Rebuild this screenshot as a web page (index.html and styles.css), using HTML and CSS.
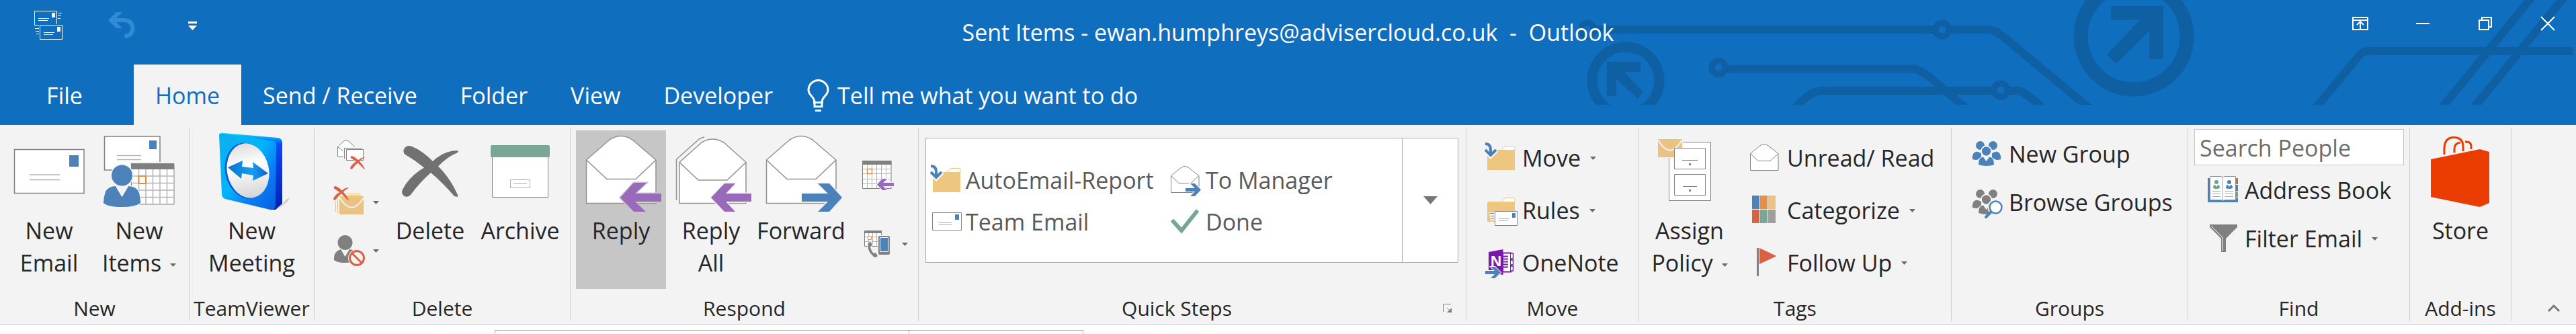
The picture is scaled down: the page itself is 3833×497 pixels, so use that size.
FILE: index.html
```html
<!DOCTYPE html>
<html lang="en">
<head>
  <meta charset="UTF-8">
  <meta name="viewport" content="width=device-width, initial-scale=1.0">
  <title>Sent Items - Outlook</title>
  <link rel="stylesheet" href="styles.css">
</head>
<body>

  <!-- Shared icon shapes -->
  <svg class="defs" width="0" height="0" aria-hidden="true">
    <symbol id="cross" viewBox="0 0 84 76">
      <path d="M15 1Q30 7 46 23Q58 11 75 7.500L83 7Q85 9 82 10.500Q68 16 54 30.500Q72 48 83 73V76L78 75Q62 56 43 40Q26 55 13 73Q9 77 4 75Q-1 72 .5 66Q10 46 33 32.500Q19 21 5 13Q1 10 3 5Q7-2 15 1Z"/>
    </symbol>
    <symbol id="open-mail" viewBox="0 0 48 48">
      <path d="M1.500 17.500L15 6.500Q22 .5 29 6.500L43 17.500V42.500H1.500Z" fill="#fff" stroke="#828282"/>
      <path d="M1.500 17.500L13 28.500H31L43 17.500" fill="none" stroke="#828282"/>
    </symbol>
    <symbol id="open-mail-big" viewBox="0 0 120 123">
      <path d="M8.500 44L43 14Q60 3 77 14L112 44V108.500H8.500Z" fill="#fff" stroke="#929292" stroke-width="1.500"/>
      <path d="M8.500 44L39 72.500H82L112 44" fill="none" stroke="#929292" stroke-width="1.500"/>
    </symbol>
    <symbol id="move-folder" viewBox="0 0 48 48">
      <path d="M25 12L30.500 6.500H43Q45 6.500 45 9V13" fill="#fff" stroke="#edc780"/>
      <path d="M4 12H45V42H4Z" fill="#edc780"/>
      <path class="halo" d="M1 3Q9 3 9 12V21M0 12L9 21L18 12" stroke-width="7" fill="none"/>
      <path d="M1 3Q9 3 9 12V20M1 12L9 20L17 12" stroke="#4c82b9" stroke-width="4" fill="none"/>
    </symbol>
    <symbol id="drop" viewBox="0 0 9 5"><path d="M0 0H9L4.500 5Z" fill="#6a6a6a"/></symbol>
    <symbol id="people" viewBox="0 0 48 48">
      <circle cx="13.500" cy="11.500" r="6.500"/><circle cx="32.500" cy="11.500" r="6.500"/>
      <path d="M2 32Q1 22 8 20.500Q12 21 15 23V31Q10 31 9 33Q4 33 2 32ZM44 32Q45 22 38 20.500Q34 21 31 23V31Q36 31 37 33Q42 33 44 32Z"/>
      <circle class="halo" cx="22.500" cy="20" r="7.500" stroke-width="2"/><circle cx="22.500" cy="20" r="6.500"/>
      <path class="halo" stroke-width="2" paint-order="stroke" d="M11 40Q11 29 18 28.500L22.500 35L27 28.500Q34 29 34 40Q23 44 11 40Z"/>
    </symbol>
  </svg>

  <header class="header">
    <svg class="circuit" width="1483" height="156" viewBox="0 0 1483 156" fill="none" stroke="#0f5fa3" stroke-width="12" aria-hidden="true">
      <path d="M22 44H530M550 44H608Q618 44 630 54L760 162"/>
      <circle cx="11.500" cy="44" r="10" stroke-width="9"/>
      <circle cx="540" cy="44" r="10" stroke-width="9"/>
      <path d="M217 102.500H498Q508 104 524 117L574 160"/>
      <circle cx="207" cy="100.500" r="10" stroke-width="9"/>
      <path d="M322 160Q342 136 360 135H617M637 135H653Q664 137 688 160"/>
      <circle cx="627" cy="134" r="10" stroke-width="9"/>
      <circle cx="69" cy="120" r="50" stroke-width="15"/>
      <path d="M41 92H91V107H67L95 137L87 147L55 118V143H41Z" fill="#0f5fa3" stroke="none"/>
      <circle cx="825" cy="54" r="79" stroke-width="21"/>
      <path d="M791 9H869V88H848V46L799 95L785 81L834 30H791Z" fill="#0f5fa3" stroke="none"/>
      <path d="M1096 160L1161 82Q1166 76 1174 76H1479"/>
      <path d="M1284 160L1417-4M1331 160L1465-4"/>
    </svg>

    <div class="titlebar">
      <div class="quick-access">
        <button class="qa-button" aria-label="Send/Receive All Folders">
          <svg width="44" height="44" viewBox="0 0 44 44" fill="none" stroke="#fff">
            <path d="M33.500 20V.5H.5V21.500H7M8.500 21.500H41.500V42.500H8.500Z"/>
            <path d="M6 11.500H22M6 14.500H20M14 32.500H30M14 35.500H28M35 3.500H41M35 7.500H40M35 11.500H39M1 26.500H7M2 30.500H7M3 34.500H7"/>
            <path d="M26 3H31V10H26ZM34 24H39V31H34Z" fill="#fff" stroke="none"/>
          </svg>
        </button>
        <button class="qa-button" aria-label="Undo">
          <svg width="40" height="40" viewBox="0 0 40 40">
            <path d="M0 12L12 0H21L12 9H24Q39 10 39.500 24Q39 38 24.500 39V33Q33 32 33.500 24Q33 16 24 15H12L21 24H12Z" fill="#2f8bd3"/>
          </svg>
        </button>
        <button class="qa-button narrow" aria-label="Customize Quick Access Toolbar">
          <svg width="13" height="13" viewBox="0 0 13 13"><path d="M0 0H13V3H0ZM0 6H13L6.500 13Z" fill="#fff"/></svg>
        </button>
      </div>
      <h1 class="title">Sent Items - ewan.humphreys@advisercloud.co.uk &nbsp;-&nbsp; Outlook</h1>
      <div class="window-buttons">
        <button class="win-button" aria-label="Ribbon Display Options">
          <svg width="24" height="20" viewBox="0 0 24 20" fill="none" stroke="#fff" stroke-width="2"><path d="M1 1H23V19H1ZM1 5H23M12 18V7M7 12L12 7L17 12"/></svg>
        </button>
        <button class="win-button" aria-label="Minimize">
          <svg width="20" height="20" viewBox="0 0 20 20"><path d="M0 9H20V11H0Z" fill="#fff"/></svg>
        </button>
        <button class="win-button" aria-label="Restore Down">
          <svg width="20" height="20" viewBox="0 0 20 20" fill="none" stroke="#fff" stroke-width="2"><path d="M1 5H15V19H1ZM5 4V1H19V15H16"/></svg>
        </button>
        <button class="win-button" aria-label="Close">
          <svg width="20" height="20" viewBox="0 0 20 20" fill="none" stroke="#fff" stroke-width="2"><path d="M0 0L20 20M20 0L0 20"/></svg>
        </button>
      </div>
    </div>

    <nav class="tabs">
      <button class="tab file">File</button>
      <button class="tab active">Home</button>
      <button class="tab">Send / Receive</button>
      <button class="tab">Folder</button>
      <button class="tab">View</button>
      <button class="tab">Developer</button>
      <button class="tell-me">
        <svg width="33" height="48" viewBox="0 0 33 48" fill="none" stroke="#fff" stroke-width="3">
          <path d="M11 34C11 26 2 24 2 16A14.500 14.500 0 0 1 31 16C31 24 22 26 22 34"/>
          <path d="M9 34.500H24M11 33V40.500H22V33M12 46.500H21"/>
        </svg>
        Tell me what you want to do
      </button>
    </nav>
  </header>

  <main class="ribbon">

    <!-- New -->
    <section class="group">
      <div class="group-body new-body">
        <button class="big">
          <svg class="big-icon" viewBox="0 0 120 123">
            <path d="M8.500 28.500H112V93.500H8.500Z" fill="#fff" stroke="#828282" stroke-width="1.500"/>
            <path d="M90 37H104V54H90Z" fill="#4c82b9"/>
            <path d="M31 66H76M31 73.500H76" stroke="#b4b4b4" stroke-width="1.500"/>
          </svg>
          <span>New<br>Email</span>
        </button>
        <button class="big">
          <svg class="big-icon" viewBox="0 0 120 123">
            <path d="M8.500 9H91V59H8.500Z" fill="#fff" stroke="#828282" stroke-width="1.500"/>
            <path d="M75 15H86V28H75Z" fill="#4c82b9"/>
            <path d="M27 37.500H63M27 43.500H63" stroke="#b4b4b4" stroke-width="1.500"/>
            <path d="M46 47H114V112H46Z" fill="#f3f3f3"/>
            <path d="M48.500 50H112V110H48.500Z" fill="#fff" stroke="#828282"/>
            <path d="M59.500 58V110M70 58V110M80.500 58V110M91 58V110M101.500 58V110M48 68H112M48 78.500H112M48 89H112M48 99.500H112" stroke="#b4b4b4" stroke-width="1.500"/>
            <path d="M48 49H112V58H48Z" fill="#808080"/>
            <path d="M59.500 68H70V79H59.500Z" fill="#fff" stroke="#e78b3e" stroke-width="2"/>
            <g class="halo" fill="#4c82b9" stroke-width="3" paint-order="stroke">
              <circle cx="34.500" cy="67" r="15.500"/>
              <path d="M25 83L34.500 99L44 83Q56 83 60 93Q62 101 62 108Q54 114 34.500 114Q14 114 7 108Q7 99 10 91Q15 83 25 83Z"/>
            </g>
            <path d="M25 83H44L34.500 99Z" fill="#f3f3f3"/>
          </svg>
          <span>New<br>Items <svg class="drop"><use href="#drop"/></svg></span>
        </button>
      </div>
      <div class="group-label">New</div>
    </section>

    <!-- TeamViewer -->
    <section class="group">
      <div class="group-body center">
        <button class="big">
          <svg class="big-icon" viewBox="0 0 120 123">
            <defs>
              <linearGradient id="tv" x1="0" y1="0" x2="1" y2="1"><stop offset="0" stop-color="#0cb0ec"/><stop offset=".45" stop-color="#02b4fb"/><stop offset=".7" stop-color="#0a7df5"/><stop offset="1" stop-color="#0560dd"/></linearGradient>
              <linearGradient id="tv-side" x1="0" y1="0" x2="0" y2="1"><stop offset="0" stop-color="#00e5ff"/><stop offset=".15" stop-color="#0848fb"/><stop offset="1" stop-color="#0220b0"/></linearGradient>
              <linearGradient id="tv-disc" x1="0" y1="0" x2="0" y2="1"><stop offset="0" stop-color="#dedede"/><stop offset=".4" stop-color="#fff"/><stop offset="1" stop-color="#d4d4d4"/></linearGradient>
              <linearGradient id="tv-arrow"><stop offset="0" stop-color="#0a6fd0"/><stop offset=".6" stop-color="#14a0f0"/><stop offset="1" stop-color="#1060c8"/></linearGradient>
            </defs>
            <path d="M97 118L112 102Q118 99 113 106Z" fill="#cfcfcf"/>
            <path d="M11 7Q12 3 18 4L98 11Q105 12 105 18V109L95 118H88Z" fill="url(#tv-side)"/>
            <path d="M11 7Q12 4 18 5L92 16Q96 17 96 22L95 112Q94 119 87 118L20 102Q15 100 15 95Z" fill="url(#tv)"/>
            <ellipse cx="52" cy="60" rx="32" ry="42" transform="rotate(-12 52 60)" fill="#0560d8"/>
            <ellipse cx="54" cy="60" rx="31" ry="41" transform="rotate(-12 54 60)" fill="url(#tv-disc)"/>
            <path d="M24 55L46 45L45 54L62 56L61 47L84 64L61 75L62 67L45 64L44 72Z" fill="url(#tv-arrow)"/>
          </svg>
          <span>New<br>Meeting</span>
        </button>
      </div>
      <div class="group-label">TeamViewer</div>
    </section>

    <!-- Delete -->
    <section class="group">
      <div class="group-body">
        <div class="stack icon-only">
          <button class="row" aria-label="Ignore">
            <svg class="icon" viewBox="0 0 48 48">
              <path d="M6.500 13.500L15 5.500Q19 2 23 5.500L32 13.500V28H6.500Z" fill="#fff" stroke="#828282"/>
              <path d="M6.500 13.500L14 19" stroke="#828282"/>
              <path d="M14.500 13.500H47V36H14.500Z" fill="#f3f3f3"/>
              <path d="M16.500 31V15.500H42M19.500 17.500H44.500V33.500H19.500Z" fill="#fff" stroke="#828282"/>
              <use class="halo" href="#cross" x="25" y="27" width="22" height="20" fill="#d96245"/>
            </svg>
          </button>
          <button class="row" aria-label="Clean Up">
            <svg class="icon" viewBox="0 0 48 48">
              <path d="M9 15H45V42H9Z" fill="#eac282"/>
              <path d="M9 16Q27 47 45 17" fill="none" stroke="#f3f3f3" stroke-width="2"/>
              <path d="M20 11.500H39M21 13.500H42M3.500 22V38M6.500 19V40" stroke="#eac282"/>
              <use href="#cross" width="23" height="21" fill="#d96245"/>
            </svg>
            <svg class="drop"><use href="#drop"/></svg>
          </button>
          <button class="row" aria-label="Junk">
            <svg class="icon" viewBox="0 0 48 48">
              <circle cx="17.500" cy="12" r="11" fill="#808080"/>
              <path d="M11 22L17.500 33L24 22Q33 22 33 34V40Q25 42 17 42Q6 42 1 38Q0 25 11 22Z" fill="#808080"/>
              <circle class="halo" cx="35" cy="35" r="12" fill="#f3f3f3" stroke-width="2"/>
              <circle cx="35" cy="35" r="10.500" fill="#f3f3f3" stroke="#d96245" stroke-width="3"/>
              <path d="M27.500 27.500L42.500 42.500" stroke="#d96245" stroke-width="3"/>
            </svg>
            <svg class="drop"><use href="#drop"/></svg>
          </button>
        </div>
        <button class="big">
          <svg class="big-icon" viewBox="0 0 120 123"><use href="#cross" x="18" y="23" width="84" height="76" fill="#717171"/></svg>
          <span>Delete</span>
        </button>
        <button class="big">
          <svg class="big-icon" viewBox="0 0 120 123">
            <path d="M18.500 38H101.500V99.500H18.500Z" fill="#fff" stroke="#828282"/>
            <rect x="16" y="22" width="88" height="18" rx="2" fill="#7aa795"/>
            <path d="M45.500 73.500H74.500V85.500H45.500ZM50 79.500H70" fill="none" stroke="#b0b0b0"/>
          </svg>
          <span>Archive</span>
        </button>
      </div>
      <div class="group-label">Delete</div>
    </section>

    <!-- Respond -->
    <section class="group">
      <div class="group-body respond-body">
        <button class="big pressed">
          <svg class="big-icon" viewBox="0 0 120 123">
            <use href="#open-mail-big"/>
            <path class="halo" fill="#9969ba" stroke-width="3" paint-order="stroke" d="M59 100L79 78H98L81 94H120V106H81L97 121H79Z"/>
          </svg>
          <span>Reply</span>
        </button>
        <button class="big">
          <svg class="big-icon" viewBox="0 0 120 123">
            <path d="M8.500 104V43L40 15Q44 11 50 10" fill="none" stroke="#929292" stroke-width="1.500"/>
            <path d="M13 47.500L46 18Q62 8 79 18L112 47.500V108.500H13Z" fill="#fff" stroke="#929292" stroke-width="1.500"/>
            <path d="M13 47.500L41 74H84L112 47.500" fill="none" stroke="#929292" stroke-width="1.500"/>
            <path class="halo" fill="#9969ba" stroke-width="3" paint-order="stroke" d="M60 100L80 79H96L82 94H120V106H82L96 121H80Z"/>
          </svg>
          <span>Reply<br>All</span>
        </button>
        <button class="big">
          <svg class="big-icon" viewBox="0 0 120 123">
            <use href="#open-mail-big"/>
            <path class="halo" fill="#4c82b9" stroke-width="3" paint-order="stroke" d="M121 100L102 79H85L100 94H61V106H100L85 121H102Z"/>
          </svg>
          <span>Forward</span>
        </button>
        <div class="stack pair">
          <button class="row" aria-label="Reply with Meeting">
            <svg class="icon" viewBox="0 0 48 48">
              <path d="M.5 3H43V43.500H.5Z" fill="#fff" stroke="#828282"/>
              <path d="M7.500 8V43M14.500 8V43M21.500 8V43M28.500 8V43M35.500 8V43M1 14.500H43M1 21.500H43M1 29.500H43M1 36.500H43" stroke="#b4b4b4"/>
              <path d="M0 2H43.500V8H0Z" fill="#808080"/>
              <path d="M7.500 14.500H14.500V21.500H7.500Z" fill="#fff" stroke="#e78b3e" stroke-width="1.500"/>
              <path class="halo" fill="#9969ba" stroke-width="2" paint-order="stroke" d="M22 37.500L30 29H37L31 35H47V40H31L37 46H30Z"/>
            </svg>
          </button>
          <button class="row" aria-label="More Respond Actions">
            <svg class="icon" viewBox="0 0 48 48">
              <path d="M3.500 5H28.500V27.500H3.500Z" fill="#fff" stroke="#828282"/>
              <path d="M9.500 8V27M15.500 8V27M21.500 8V27M4 13.500H28M4 20.500H28" stroke="#b4b4b4"/>
              <path d="M3 4H29V8H3Z" fill="#808080"/>
              <path d="M8.500 12.500H13.500V17.500H8.500Z" fill="#fff" stroke="#e78b3e"/>
              <path class="halo" fill="#808080" stroke-width="2" paint-order="stroke" d="M9 22L13 21L15 26L12 28Q13 34 17 38L20 37L23 42Q20 45 17 43Q6 34 9 22Z"/>
              <rect class="halo" x="24" y="12" width="17" height="28" rx="2" fill="#808080" stroke-width="2" paint-order="stroke"/>
              <path d="M26.500 14.500H38.500V35.500H26.500Z" fill="#4c82b9" stroke="#fff"/>
            </svg>
            <svg class="drop"><use href="#drop"/></svg>
          </button>
        </div>
      </div>
      <div class="group-label">Respond</div>
    </section>

    <!-- Quick Steps -->
    <section class="group">
      <div class="group-body">
        <div class="gallery">
          <div class="gallery-items">
            <button class="step"><svg class="icon" viewBox="0 0 48 48"><use href="#move-folder"/></svg>AutoEmail-Report</button>
            <button class="step">
              <svg class="icon" viewBox="0 0 48 48">
                <use href="#open-mail"/>
                <path class="halo" fill="#4c82b9" stroke-width="2" paint-order="stroke" d="M46 38.500L37 29H30L37 36H23V41H37L30 48H37Z"/>
              </svg>To Manager</button>
            <button class="step">
              <svg class="icon" viewBox="0 0 48 48">
                <path d="M3.500 10.500H46.500V36.500H3.500Z" fill="#fff" stroke="#828282"/>
                <path d="M37 13H43V21H37Z" fill="#4c82b9"/>
                <path d="M13 25.500H32M13 28.500H32" stroke="#b4b4b4"/>
              </svg>Team Email</button>
            <button class="step">
              <svg class="icon" viewBox="0 0 48 48"><path d="M3 21.500L17 37L41 7" fill="none" stroke="#76a795" stroke-width="6"/></svg>Done</button>
          </div>
          <button class="gallery-more" aria-label="More quick steps">
            <svg width="21" height="12" viewBox="0 0 21 12"><path d="M0 0H21L10.500 12Z" fill="#777"/></svg>
          </button>
        </div>
      </div>
      <div class="group-label">
        <span>Quick Steps</span>
        <button class="launcher" aria-label="Manage Quick Steps">
          <svg width="13" height="13" viewBox="0 0 13 13"><path d="M.5 12V.5H12M6 6L11 11" fill="none" stroke="#808080"/><path d="M13 6V13H6Z" fill="#808080"/></svg>
        </button>
      </div>
    </section>

    <!-- Move -->
    <section class="group">
      <div class="group-body">
        <div class="stack tall">
          <button class="row"><svg class="icon" viewBox="0 0 48 48"><use href="#move-folder"/></svg>Move <svg class="drop"><use href="#drop"/></svg></button>
          <button class="row">
            <svg class="icon" viewBox="0 0 48 48">
              <path d="M25 11L30.500 5.500H43Q45 5.500 45 8V12" fill="#fff" stroke="#edc780"/>
              <path d="M4 13Q4 11 6 11H45V41H4Z" fill="#edc780"/>
              <path d="M7 27H15V39H9Z" fill="#f3f3f3"/>
              <path d="M8 28.500H14M9 32.500H14M10 36.500H14" stroke="#808080"/>
              <path d="M15.500 25.500H48.500V46.500H15.500Z" fill="#fff" stroke="#828282"/>
              <path d="M41 28H46V35H41Z" fill="#4c82b9"/>
              <path d="M21 36.500H37M21 39.500H35" stroke="#b4b4b4"/>
            </svg>Rules <svg class="drop"><use href="#drop"/></svg></button>
          <button class="row">
            <svg class="icon" viewBox="0 0 48 48">
              <path d="M27 9.500H39V37.500H27Z" fill="#fff" stroke="#7719aa" stroke-width="2"/>
              <path d="M39 10H42.500V18H39M39 20H42.500V27H39M39 29H42.500V36H39" fill="#fff" stroke="#7719aa" stroke-width="1.500"/>
              <path d="M28 14.500H35M28 18.500H35M28 22.500H35M28 26.500H35M28 30.500H35" stroke="#7719aa" stroke-width="2"/>
              <path d="M6 8L27.500 4V42L6 38Z" fill="#7719aa"/>
              <text x="17" y="29" text-anchor="middle" font-size="21" font-weight="700" fill="#fff">N</text>
              <path class="halo" fill="#4c82b9" stroke-width="2" paint-order="stroke" d="M24 38.500L15.500 30H9L15 36H1V41H15L9 47H15.500Z"/>
            </svg>OneNote</button>
        </div>
      </div>
      <div class="group-label">Move</div>
    </section>

    <!-- Tags -->
    <section class="group">
      <div class="group-body respond-body">
        <button class="big">
          <svg class="big-icon" viewBox="0 0 120 123">
            <path d="M29.500 17.500H91.500V104.500H29.500Z" fill="#fff" stroke="#828282"/>
            <path d="M12 12H50V41H12Z" fill="#f3f3f3"/>
            <path d="M13 13H49V40H13Z" fill="#eac282"/>
            <path d="M13 14Q31 45 49 14" fill="none" stroke="#f3f3f3" stroke-width="2"/>
            <path d="M37.500 26.500H83.500V57.500H37.500ZM37.500 65.500H83.500V96.500H37.500Z" fill="#fff" stroke="#828282"/>
            <path d="M49 44.500H72M50 83.500H71" stroke="#828282"/>
            <path d="M59 49H62V52H59ZM59 88H62V91H59Z" fill="#808080"/>
          </svg>
          <span>Assign<br>Policy <svg class="drop"><use href="#drop"/></svg></span>
        </button>
        <div class="stack tall tags">
          <button class="row"><svg class="icon" viewBox="0 0 48 48"><use href="#open-mail"/></svg>Unread/ Read</button>
          <button class="row">
            <svg class="icon" viewBox="0 0 48 48">
              <path d="M4 2H15V22H4Z" fill="#4c82b9"/><path d="M16 2H27V22H16Z" fill="#e78f45"/><path d="M28 2H39V22H28Z" fill="#eac282"/>
              <path d="M4 23H15V43H4Z" fill="#d96245"/><path d="M16 23H27V43H16Z" fill="#7aa795"/><path d="M28 23H39V43H28Z" fill="#9e9e9e"/>
            </svg>Categorize <svg class="drop"><use href="#drop"/></svg></button>
          <button class="row">
            <svg class="icon" viewBox="0 0 48 48"><path d="M11 2H14V44H11Z" fill="#808080"/><path d="M15 2L40.500 14L15 26Z" fill="#d96245"/></svg>Follow Up <svg class="drop"><use href="#drop"/></svg></button>
        </div>
      </div>
      <div class="group-label">Tags</div>
    </section>

    <!-- Groups -->
    <section class="group">
      <div class="group-body">
        <div class="stack">
          <button class="row"><svg class="icon" viewBox="0 0 48 48" fill="#4c82b9"><use href="#people"/></svg>New Group</button>
          <button class="row">
            <svg class="icon" viewBox="0 0 48 48" fill="#808080">
              <use href="#people"/>
              <circle cx="36.500" cy="31.500" r="12" fill="#f3f3f3"/>
              <path d="M30 38L22 46" stroke="#4c82b9" stroke-width="4" stroke-linecap="round"/>
              <circle cx="36.500" cy="31.500" r="9" fill="#fff" stroke="#4c82b9" stroke-width="2.500"/>
            </svg>Browse Groups</button>
        </div>
      </div>
      <div class="group-label">Groups</div>
    </section>

    <!-- Find -->
    <section class="group">
      <div class="group-body find-body">
        <input class="search" type="text" placeholder="Search People" aria-label="Search People">
        <div class="stack find">
          <button class="row">
            <svg class="icon" viewBox="0 0 48 48">
              <path d="M1 6H46V42H1Z" fill="#4c82b9"/>
              <path d="M42 5H47V36H42Z" fill="#f3f3f3"/>
              <path d="M43 6H46V15H43Z" fill="#d96245"/><path d="M43 16H46V25H43Z" fill="#4c82b9"/><path d="M43 26H46V35H43Z" fill="#6aa58c"/>
              <path d="M4.500 3.500H20L23.500 4.500L27 3.500H42.500V38.500H27L23.500 39.500L20 38.500H4.500Z" fill="#fff" stroke="#909090"/>
              <path d="M23.500 4V39M8 25.500H20M8 29.500H20M8 33.500H20M27 25.500H39M27 29.500H39M27 33.500H39" stroke="#a8a8a8"/>
              <g fill="#6aa58c"><circle cx="14" cy="12" r="3"/><path d="M9 21Q9 16 12 16L14 19L16 16Q19 16 19 21Q14 23 9 21Z"/></g>
              <g fill="#4c82b9"><circle cx="33" cy="12" r="3"/><path d="M28 21Q28 16 31 16L33 19L35 16Q38 16 38 21Q33 23 28 21Z"/></g>
            </svg>Address Book</button>
          <button class="row">
            <svg class="icon" viewBox="0 0 48 48"><path d="M4 3H45V7L28 24V44H21V24L4 7Z" fill="#808080"/><path d="M6 5L23.500 22.500V42" fill="none" stroke="#fff"/></svg>Filter Email <svg class="drop"><use href="#drop"/></svg></button>
        </div>
      </div>
      <div class="group-label">Find</div>
    </section>

    <!-- Add-ins -->
    <section class="group">
      <div class="group-body center">
        <button class="big">
          <svg class="big-icon" viewBox="0 0 120 123">
            <path d="M16 43L89 28L103 32V108L89 114L16 99Z" fill="#eb3c00"/>
            <path d="M36 36V28Q36 10.500 50 10.500Q64 10.500 64 24V31M51 33V28Q51 19 60 18M67 17Q76 16 76 24V28" fill="none" stroke="#eb3c00" stroke-width="3"/>
          </svg>
          <span>Store</span>
        </button>
      </div>
      <div class="group-label">Add-ins</div>
    </section>

    <div class="collapse-cell">
      <button class="collapse" aria-label="Collapse the Ribbon">
        <svg width="18" height="12" viewBox="0 0 18 12"><path d="M1 11L9 3L17 11" fill="none" stroke="#777" stroke-width="3"/></svg>
      </button>
    </div>
  </main>

  <div class="workspace">
    <div class="pane list"></div>
    <div class="pane"></div>
  </div>

</body>
</html>
```

FILE: styles.css
```css
/* General Styles */
* {
  box-sizing: border-box;
}

body {
  font-family: "Open Sans", "Segoe UI", sans-serif;
  font-size: 34px;
  line-height: 48px;
  margin: 0;
  min-height: 100vh;
  display: flex;
  flex-direction: column;
  background: #fff;
  color: #262626;
  --halo: #f3f3f3;
}

button {
  font: inherit;
  color: inherit;
  background: none;
  border: none;
  padding: 0;
  cursor: pointer;
  white-space: nowrap;
}

svg {
  display: block;
  flex: none;
  overflow: visible;
}

.defs {
  position: absolute;
}

.halo {
  stroke: var(--halo);
}

/* Title bar */
.header {
  position: relative;
  background: #106ebe;
  color: #fff;
}

.circuit {
  position: absolute;
  top: 0;
  right: 0;
  overflow: hidden;
}

.titlebar {
  position: relative;
  display: grid;
  grid-template-columns: 1fr auto 1fr;
  height: 96px;
}

.quick-access {
  display: flex;
  height: 76px;
  padding-left: 19px;
}

.qa-button {
  width: 108px;
  display: flex;
  align-items: center;
  justify-content: center;
}

.qa-button.narrow {
  width: 102px;
}

.title {
  margin: 0;
  font-size: 34px;
  font-weight: 400;
  line-height: 96px;
  white-space: nowrap;
}

.window-buttons {
  display: flex;
  justify-content: flex-end;
  gap: 9px;
  height: 70px;
}

.win-button {
  width: 84px;
  display: flex;
  align-items: center;
  justify-content: center;
}

/* Tabs */
.tabs {
  position: relative;
  display: flex;
  height: 90px;
}

.tab {
  padding: 2px 32px 0;
}

.tab.file {
  width: 192px;
  margin-right: 7px;
}

.tab.active {
  background: #f3f3f3;
  color: #106ebe;
}

.tell-me {
  display: flex;
  align-items: center;
  gap: 12px;
  padding: 2px 0 0 19px;
}

/* Ribbon */
.ribbon {
  display: grid;
  grid-template-columns: 282fr 186fr 381fr 518fr 815fr 257fr 465fr 352fr 330fr 151fr 96fr;
  padding: 4px 0;
  background: #f3f3f3;
  border-bottom: 1px solid #d0d0d0;
}

.group {
  display: flex;
  flex-direction: column;
  min-width: 0;
  border-right: 1px solid #d0d0d0;
}

.group-body {
  display: flex;
  height: 248px;
}

.group-body.center {
  justify-content: center;
}

.new-body {
  padding-left: 6px;
}

.respond-body {
  padding-left: 8px;
}

.group-label {
  display: flex;
  justify-content: center;
  height: 40px;
  font-size: 30px;
  line-height: 42px;
}

.group-label span {
  flex: 1;
  text-align: center;
}

.launcher {
  width: 46px;
  display: flex;
  align-items: center;
  padding-left: 12px;
}

/* Large buttons */
.big {
  width: 134px;
  height: 236px;
  margin-top: 4px;
  display: flex;
  flex-direction: column;
  align-items: center;
}

.big.pressed {
  background: #c6c6c6;
  --halo: #c6c6c6;
}

.big-icon {
  width: 120px;
  height: 123px;
}

.big span {
  padding-top: 2px;
}

.drop {
  width: 9px;
  height: 5px;
}

.big .drop {
  display: inline-block;
  vertical-align: middle;
  margin-left: 4px;
}

/* Small buttons */
.stack {
  display: flex;
  flex-direction: column;
  align-items: flex-start;
  padding: 3px 0 0 29px;
}

.row {
  display: flex;
  align-items: center;
  gap: 8px;
  height: 72px;
}

.row .drop {
  margin-left: 6px;
}

.icon {
  width: 48px;
  height: 48px;
}

.icon-only {
  width: 105px;
  padding-left: 28px;
}

.pair {
  gap: 30px;
  padding: 35px 0 0 24px;
}

.pair .drop,
.icon-only .drop {
  margin-left: 3px;
}

.tall {
  padding: 6px 0 0 27px;
}

.tall .row {
  height: 78px;
}

.tags {
  padding-left: 22px;
}

/* Quick Steps gallery */
.gallery {
  flex: 1;
  display: flex;
  height: 186px;
  margin: 15px 11px 0 10px;
  background: #fff;
  border: 1px solid #ababab;
  color: #5a5a5a;
  --halo: #fff;
}

.gallery-items {
  flex: 1;
  display: grid;
  grid-template-columns: 357px 1fr;
  grid-auto-rows: 62px;
  align-content: center;
  padding: 2px 0 0 6px;
}

.step {
  display: flex;
  align-items: center;
  gap: 5px;
}

.gallery-more {
  width: 83px;
  display: flex;
  align-items: center;
  justify-content: center;
  border-left: 1px solid #ababab;
}

/* Find */
.find-body {
  flex-direction: column;
}

.search {
  height: 54px;
  margin: 2px 8px 0 9px;
  padding: 2px 7px 0;
  font: inherit;
  color: #444;
  background: #fff;
  border: 1px solid #c6c6c6;
}

.search::placeholder {
  color: #6d6d6d;
  opacity: 1;
}

.find {
  padding: 1px 0 0 28px;
}

.collapse-cell {
  display: flex;
  align-items: flex-end;
  justify-content: flex-end;
}

.collapse {
  padding: 14px 24px;
}

/* Area under the ribbon */
.workspace {
  flex: 1;
  display: grid;
  grid-template-columns: 736fr 617fr 259fr 2221fr;
  padding-top: 8px;
}

.pane {
  border: 1px solid #a6abb5;
  border-width: 1px 1px 0 0;
}

.pane.list {
  grid-column: 2;
  border-left-width: 1px;
}
```
